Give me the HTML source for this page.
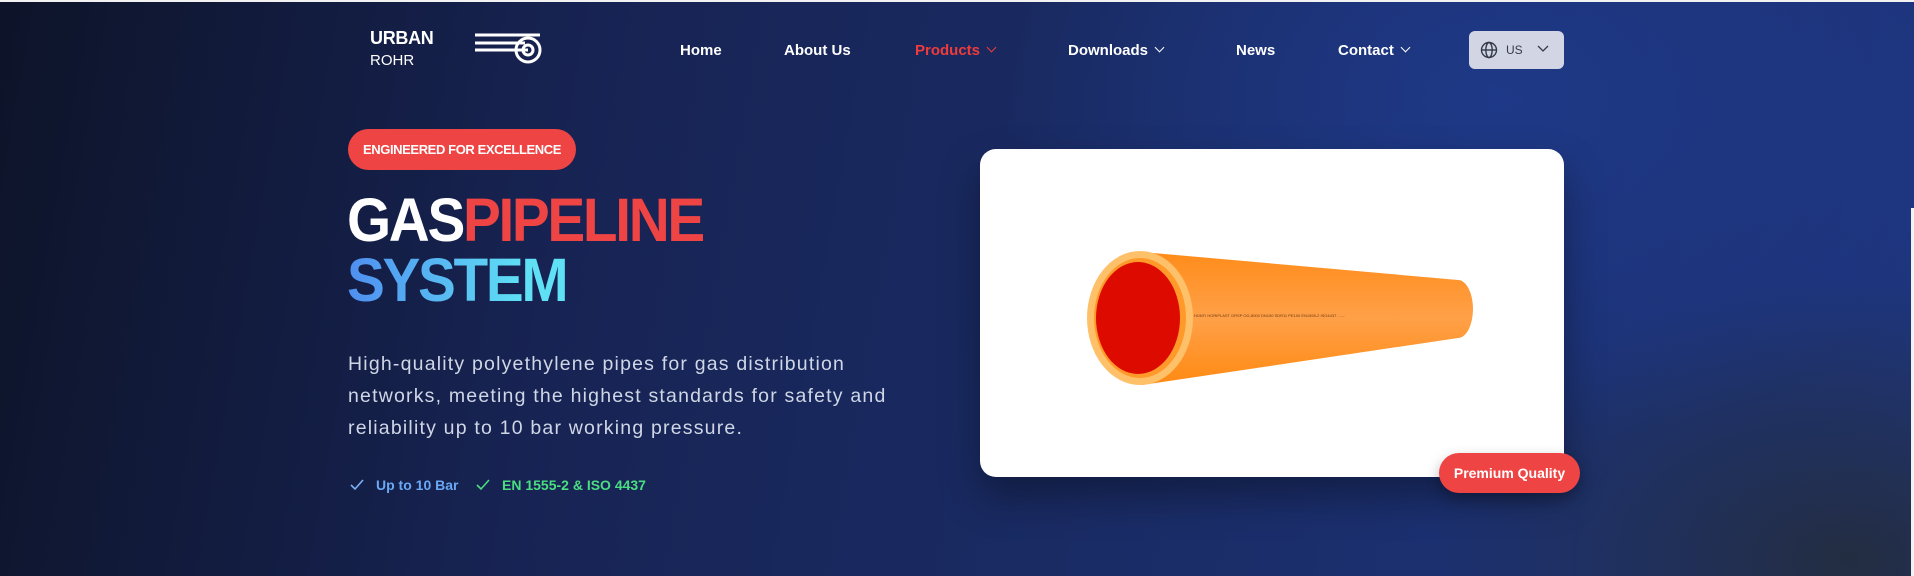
<!DOCTYPE html>
<html><head><meta charset="utf-8"><style>
*{margin:0;padding:0;box-sizing:border-box}
html,body{width:1914px;height:576px;overflow:hidden}
body{font-family:"Liberation Sans",sans-serif;position:relative;
background:
radial-gradient(ellipse 700px 500px at 1500px 100px, rgba(31,58,138,.9), rgba(31,58,138,0) 70%),
radial-gradient(ellipse 600px 400px at 1850px 560px, rgba(35,45,65,1), rgba(35,45,65,0) 70%),
linear-gradient(100deg,#0d1429 0%,#172353 30%,#1a2c66 60%,#1e3680 100%);}
.topline{position:absolute;left:0;top:0;width:1914px;height:2px;background:#f2f2f2}
.rside{position:absolute;right:0;top:208px;width:3px;height:368px;background:#f2f2f2}
.abs{position:absolute;white-space:nowrap}
.nav{color:#fff;font-size:15px;font-weight:bold;top:42px}
.chev{display:inline-block;width:7px;height:7px;border-right:1.6px solid currentColor;border-bottom:1.6px solid currentColor;transform:rotate(45deg);margin-left:8px;position:relative;top:-4px}
</style></head><body>
<div class="topline"></div><div class="rside"></div>
<div class="abs" style="left:370px;top:28px;color:#fff;font-size:18px;font-weight:bold;letter-spacing:-.3px">URBAN</div>
<div class="abs" style="left:370px;top:52px;color:#fff;font-size:15px">ROHR</div>
<svg class="abs" style="left:470px;top:26px" width="80" height="44" viewBox="0 0 80 44">
<g stroke="#fff" stroke-width="3" fill="none"><line x1="5" y1="9" x2="70" y2="9"/><line x1="5" y1="17" x2="55" y2="17"/><line x1="5" y1="24" x2="58" y2="24"/>
<circle cx="58" cy="24" r="12"/><circle cx="58" cy="24" r="5"/></g></svg>
<div class="abs nav" style="left:680px">Home</div>
<div class="abs nav" style="left:784px">About Us</div>
<div class="abs nav" style="left:915px;color:#ef3b3b">Products<span class="chev"></span></div>
<div class="abs nav" style="left:1068px">Downloads<span class="chev"></span></div>
<div class="abs nav" style="left:1236px">News</div>
<div class="abs nav" style="left:1338px">Contact<span class="chev"></span></div>
<div class="abs" style="left:1469px;top:31px;width:95px;height:38px;background:#d2d6e4;border-radius:6px"></div>
<svg class="abs" style="left:1480px;top:41px" width="18" height="18" viewBox="0 0 18 18"><g fill="none" stroke="#333a4a" stroke-width="1.4"><circle cx="9" cy="9" r="7.5"/><ellipse cx="9" cy="9" rx="3.2" ry="7.5"/><line x1="1.5" y1="9" x2="16.5" y2="9"/></g></svg>
<div class="abs" style="left:1506px;top:43px;font-size:12px;color:#333a4a">US</div>
<svg class="abs" style="left:1537px;top:45px" width="12" height="8"><path d="M1 1 L6 6 L11 1" stroke="#333a4a" stroke-width="1.3" fill="none"/></svg>

<div class="abs" style="left:348px;top:129px;width:228px;height:41px;border-radius:21px;background:#ef4444;color:#fff;font-size:13px;font-weight:bold;line-height:41px;text-align:center;letter-spacing:-.4px">ENGINEERED FOR EXCELLENCE</div>
<div class="abs" style="left:347px;top:190px;font-size:61px;font-weight:bold;line-height:60px;letter-spacing:-2.5px;transform:scaleX(.93);transform-origin:0 0"><span style="color:#fff">GAS</span><span style="color:#ef4444">PIPELINE</span><br><span style="background:linear-gradient(90deg,#4f8ef0,#5fe0f5 190px);-webkit-background-clip:text;color:transparent">SYSTEM</span></div>
<div class="abs" style="left:348px;top:348px;font-size:19.5px;line-height:32px;color:#cfd6e6;letter-spacing:1.2px">High-quality polyethylene pipes for gas distribution<br>networks, meeting the highest standards for safety and<br>reliability up to 10 bar working pressure.</div>
<svg class="abs" style="left:349px;top:478px" width="16" height="14"><path d="M2 7 L6 11 L14 2" stroke="#7fb0f5" stroke-width="1.6" fill="none"/></svg>
<div class="abs" style="left:376px;top:477px;font-size:14px;font-weight:bold;color:#6aa8f5">Up to 10 Bar</div>
<svg class="abs" style="left:475px;top:478px" width="16" height="14"><path d="M2 7 L6 11 L14 2" stroke="#4ade80" stroke-width="1.6" fill="none"/></svg>
<div class="abs" style="left:502px;top:477px;font-size:14px;font-weight:bold;color:#4ade80">EN 1555-2 &amp; ISO 4437</div>

<div class="abs" style="left:980px;top:149px;width:584px;height:328px;background:#fff;border-radius:16px;box-shadow:0 20px 40px rgba(0,0,0,.35)"></div>
<svg class="abs" style="left:980px;top:149px" width="584" height="328" viewBox="0 0 584 328">
<defs><linearGradient id="o" x1="0" y1="0" x2="0" y2="1"><stop offset="0" stop-color="#ff8c1a"/><stop offset=".5" stop-color="#ffa048"/><stop offset="1" stop-color="#ff8a12"/></linearGradient></defs>
<path d="M162 103 L478 131 A15 29 0 0 1 478 189 L162 236 Z" fill="url(#o)"/>
<ellipse cx="160" cy="169" rx="53" ry="67" fill="#ffc06a"/>
<ellipse cx="160" cy="169" rx="46" ry="60" fill="#ff9a2a"/>
<ellipse cx="158" cy="169" rx="42" ry="56" fill="#dd0a00"/>
<text x="214" y="168" font-size="4" fill="#6a3a10" font-family="Liberation Sans">HÜNTI HORIPLAST GRSP OG-8000 DN150 SDR11 PE100 EN1555-2 ISO4437 .......</text>
</svg>
<div class="abs" style="left:1439px;top:453px;width:141px;height:40px;border-radius:20px;background:#ef4444;color:#fff;font-size:14px;font-weight:bold;line-height:40px;text-align:center;box-shadow:0 6px 14px rgba(0,0,0,.3)">Premium Quality</div>
</body></html>
